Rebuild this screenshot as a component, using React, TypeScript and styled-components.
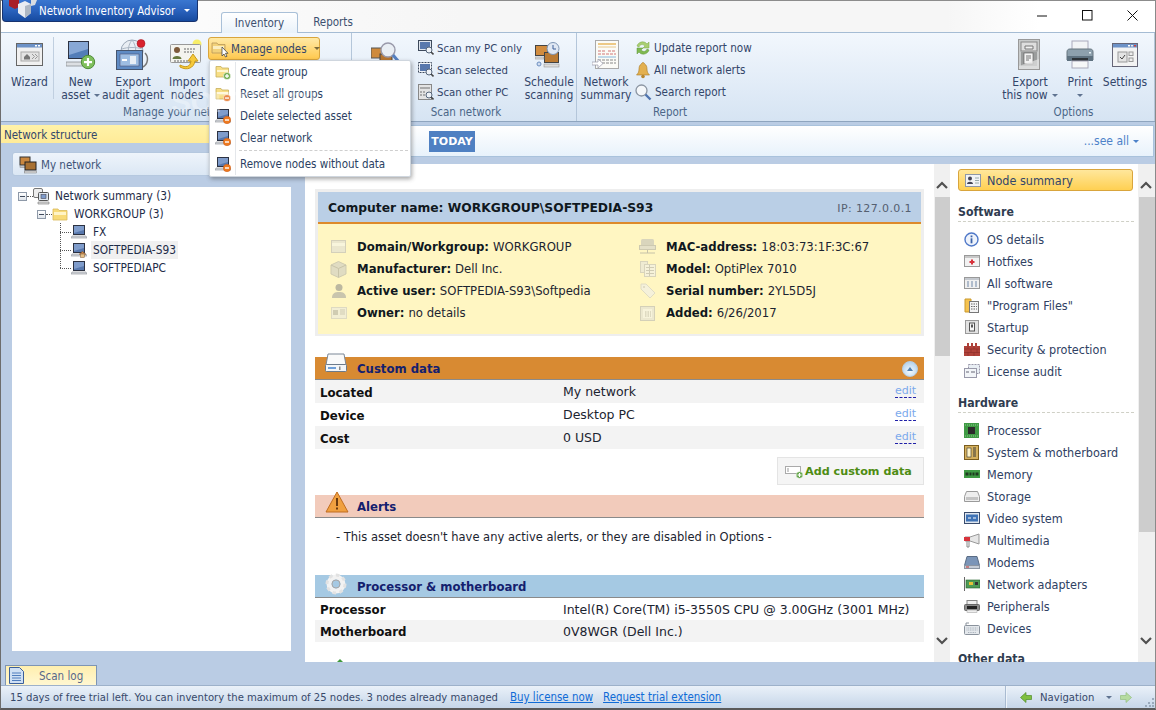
import React from "react";
import styled, { createGlobalStyle } from "styled-components";

const UI = `"DejaVu Sans Condensed", "DejaVu Sans", sans-serif`;
const WEB = `"DejaVu Sans", Verdana, sans-serif`;

const Global = createGlobalStyle`
  html, body { margin: 0; padding: 0; width: 1156px; height: 710px; overflow: hidden; background: #bacce4; }
  #root { width: 1156px; height: 710px; }
  * { box-sizing: border-box; }
`;

const Window = styled.div`
  position: relative; width: 1156px; height: 710px; display: flex; flex-direction: column;
  background: #bacce4; overflow: hidden; font-family: ${UI}; font-size: 12px; color: #2f3f60;
  border-left: 1px solid #6d6d6d; border-right: 1px solid #8a8a8a; border-bottom: 2px solid #5a5a5a;
`;

/* ---------- title bar ---------- */
const TitleBar = styled.div`
  height: 32px; flex: none; position: relative; display: flex; align-items: flex-end;
  padding-left: 220px; border-top: 1px solid #8c8c8c;
  background: linear-gradient(90deg, #fff 0, #f6f6f6 40%, #f6f6f6 82%, #fff 90%);
`;
const AppButton = styled.div`
  position: absolute; left: 1px; top: -1px; width: 196px; height: 22px; display: flex; align-items: center; white-space: nowrap;
  padding-left: 36px; color: #fff; font-size: 11.4px; border: 1px solid #17336f; border-top: none;
  border-radius: 0 0 4px 4px; background: linear-gradient(#3a77d0, #2a62bd 50%, #164a9f);
`;
const AppLogo = styled.svg`position: absolute; left: 4px; top: 0;`;
const Caret = styled.span<{ $c?: string; $ml?: number }>`
  display: inline-block; width: 0; height: 0; border: 3px solid transparent; border-top: 3px solid ${p => p.$c || "#5f7390"};
  border-bottom: none; margin-left: ${p => p.$ml ?? 4}px; vertical-align: middle; flex: none;
`;
const TabActive = styled.div`
  width: 77px; height: 21px; display: flex; align-items: center; justify-content: center; color: #3c5070;
  border: 1px solid #a9c0d8; border-bottom: none; border-radius: 3px 3px 0 0; background: linear-gradient(#fff, #e9f2fa);
  margin-bottom: -1px; position: relative; font-size: 11.5px;
`;
const Tab = styled.div`
  width: 70px; height: 20px; display: flex; align-items: center; justify-content: center; color: #3c5070; font-size: 11.5px;
`;
const WinControls = styled.div`
  position: absolute; top: 9px; right: 17px; display: flex; gap: 34px; align-items: center;
`;

/* ---------- ribbon ---------- */
const Ribbon = styled.div`
  height: 90px; flex: none; display: flex; border-top: 1px solid #a5bcd4; border-bottom: 1px solid #8fa5bf;
  background: linear-gradient(#f2f7fd, #d6e4f3);
`;
const Group = styled.div<{ $w?: number; $grow?: boolean; $sep?: boolean }>`
  ${p => (p.$grow ? "flex: 1;" : `width: ${p.$w}px; flex: none;`)}
  display: flex; flex-direction: column; position: relative;
  border-right: ${p => (p.$sep ? "1px solid #b4c6da" : "none")};
`;
const GroupBody = styled.div<{ $right?: boolean; $pl?: number }>`
  flex: 1; display: flex; padding-top: 4px; padding-left: ${p => p.$pl ?? 0}px; ${p => p.$right && "justify-content: flex-end; padding-right: 4px;"}
`;
const GroupLabel = styled.div<{ $pl?: number }>`
  height: 17px; line-height: 16px; text-align: center; color: #4b6688; font-size: 11.5px; padding-left: ${p => p.$pl ?? 0}px;
`;
const LargeBtn = styled.div<{ $w: number; $sep?: boolean }>`
  width: ${p => p.$w}px; flex: none; display: flex; flex-direction: column; align-items: center;
  text-align: center; color: #33466a; font-size: 12px; white-space: nowrap;
  border-right: ${p => (p.$sep ? "1px solid #c0cfe0" : "none")};
  height: ${p => (p.$sep ? "62px" : "auto")};
`;
const LargeIcon = styled.div`
  height: 36px; display: flex; align-items: center; justify-content: center; margin-bottom: 3px; flex: none;
`;
const LargeText = styled.div`line-height: 13px;`;
const SmallCol = styled.div<{ $w: number; $fs?: number }>`
  width: ${p => p.$w}px; flex: none; display: flex; flex-direction: column; font-size: ${p => p.$fs ?? 11.6}px;
`;
const SmallBtn = styled.div`
  height: 22px; display: flex; align-items: center; gap: 3px; white-space: nowrap; color: #33466a;
  & svg { flex: none; }
`;
const ManageBtn = styled.div`
  width: 112px; height: 23px; display: flex; align-items: center; gap: 2px; padding-left: 2px; color: #33466a; white-space: nowrap;
  border: 1px solid #d9a53c; border-radius: 3px; background: linear-gradient(#ffe9a6, #ffc94f); margin-left: -7px; font-size: 11.5px;
  flex: none; & svg { flex: none; }
`;

/* ---------- drop-down ---------- */
const Menu = styled.div`
  position: absolute; left: 208px; top: 60px; width: 202px; height: 117px; background: #fff;
  border: 1px solid #cfd6de; border-radius: 2px; box-shadow: 1px 2px 4px rgba(60, 60, 60, .45); z-index: 5; font-size: 11.5px;
  &::before { content: ""; position: absolute; left: 25px; top: 1px; bottom: 1px; width: 1px; background: #e4e7eb; }
`;
const MenuItem = styled.div`
  height: 22px; display: flex; align-items: center; padding-left: 5px; gap: 9px; color: #2b3f63; white-space: nowrap;
`;
const MenuSep = styled.div`
  height: 3px; margin: 1px 2px 0 29px; border-top: 1px dashed #cfcfcf;
`;
const Watermark = styled.div`
  position: absolute; left: 170px; top: 85px; font: bold 30px "Liberation Sans", sans-serif; letter-spacing: -0.5px; z-index: 6;
  color: rgba(255, 255, 255, .32); pointer-events: none;
`;

/* ---------- body ---------- */
const Body = styled.div`
  flex: 1; min-height: 0; display: grid; grid-template-columns: 304px 1fr; padding-top: 3px;
`;
const LeftCol = styled.div`
  display: flex; flex-direction: column; min-height: 0;
`;
const YellowBar = styled.div`
  height: 18px; flex: none; display: flex; align-items: center; padding: 2px 0 0 3px; background: linear-gradient(#fff2a8, #ffeb98);
  color: #34476a; font-size: 11.5px;
`;
const NetworkBtn = styled.div`
  height: 24px; flex: none; margin: 9px 4px 0 11px; display: flex; align-items: center; gap: 4px; padding: 1px 0 0 6px;
  border: 1px solid #b5c8df; border-radius: 3px; background: linear-gradient(#eef4fb, #dbe7f4); color: #3e5478; font-size: 11.5px;
`;
const TreePanel = styled.div`
  flex: none; height: 464px; margin: 11px 14px 0 11px; background: #fff; padding: 0 0 0 6px; font-size: 11.8px; color: #1e2c48;
`;
const TreeRow = styled.div<{ $ind: number }>`
  height: 18px; display: flex; align-items: center; padding-left: ${p => p.$ind}px; white-space: nowrap;
`;
const Expander = styled.span`
  width: 9px; height: 9px; flex: none; border: 1px solid #8e99a8; background: linear-gradient(#fff, #dfe4ea); position: relative;
  &::after { content: ""; position: absolute; left: 1px; right: 1px; top: 3px; height: 1px; background: #3f4a5c; }
`;
const Dots = styled.span<{ $w: number }>`
  width: ${p => p.$w}px; flex: none; border-top: 1px dotted #555;
`;
const TreeLabel = styled.span<{ $sel?: boolean; $ml: number }>`
  margin-left: ${p => p.$ml}px; padding: 0 2px; line-height: 18px; background: ${p => (p.$sel ? "#f0f0f0" : "transparent")};
`;
const TreeBranch = styled.div`
  margin-left: 42px; border-left: 1px dotted #555; height: 45px; margin-bottom: -45px; width: 1px;
`;

const RightCol = styled.div`
  display: flex; flex-direction: column; min-height: 0; min-width: 0;
`;
const TodayBar = styled.div`
  height: 32px; flex: none; display: flex; align-items: center; justify-content: space-between; padding: 0 14px 0 124px;
  border: 1px solid #a9c2dc; border-left: none; margin-right: 1px; background: linear-gradient(#fff, #e8f2fb);
`;
const TodayTag = styled.div`
  width: 46px; height: 21px; display: flex; align-items: center; justify-content: center; background: #4f80c2; color: #fff; font: bold 11px ${WEB};
`;
const SeeAll = styled.div`color: #4d82c9; font-size: 12px;`;

const MainArea = styled.div`
  margin-top: 7px; height: 498px; flex: none; display: flex; background: #fff;
`;
const Report = styled.div`
  width: 629px; flex: none; overflow: hidden; padding: 25px 10px 0 10px; font: 12.5px ${WEB}; color: #1c2430;
`;
const Scroll = styled.div<{ $grow?: boolean }>`
  ${p => (p.$grow ? "flex: 1;" : "width: 16px; flex: none;")} background: #f0f0f0; position: relative;
`;
const ScrollArrow = styled.svg<{ $top: number }>`position: absolute; left: 2px; top: ${p => p.$top}px;`;
const Thumb = styled.div<{ $h: number }>`
  position: absolute; left: 1px; right: 0; top: 33px; height: ${p => p.$h}px; background: #cdcdcd;
`;

const NodeCard = styled.div`
  border: 3px solid #eee; border-bottom-width: 2px; height: 147px; background: #fff6c2;
`;
const NodeHead = styled.div`
  height: 32px; display: flex; align-items: center; justify-content: space-between; padding: 2px 9px 0 10px; background: #bacfe6;
  border-bottom: 2px solid #dd8a2b; font-size: 12px;
`;
const NodeTitle = styled.b`font: bold 12.3px ${WEB}; color: #101820;`;
const NodeIp = styled.span`color: #556070; font-size: 11px; letter-spacing: .4px;`;
const NodeGrid = styled.div`
  display: grid; grid-template-columns: 309px 1fr; padding: 12px 0 0 12px; grid-auto-rows: 22px;
`;
const NodeItem = styled.div`
  display: flex; align-items: center; gap: 10px; white-space: nowrap; font-size: 11.7px;
  & b { font-weight: bold; color: #101820; margin-right: 4px; }
`;
const Section = styled.div<{ $bg: string }>`
  height: 23px; position: relative; background: ${p => p.$bg}; border-bottom: 1px solid #8a8a8a; padding: 2px 0 0 42px;
  display: flex; align-items: center; font: bold 11.7px ${WEB}; color: #14206e; flex: none;
`;
const SectionIcon = styled.div<{ $b: number; $l?: number }>`
  position: absolute; left: ${p => p.$l ?? 10}px; bottom: ${p => p.$b}px; display: flex;
`;
const Collapse = styled.div`
  position: absolute; right: 6px; top: 4px; width: 16px; height: 16px; border-radius: 50%;
  background: radial-gradient(circle at 50% 65%, #f4fbff, #a6c8e6); border: 1px solid #b6cfe4; display: flex; align-items: center; justify-content: center;
  &::after { content: ""; border: 3px solid transparent; border-bottom: 4px solid #4f7fb0; border-top: none; }
`;
const DataRow = styled.div<{ $alt?: boolean; $h?: number }>`
  height: ${p => p.$h ?? 23}px; display: grid; grid-template-columns: 243px 1fr 29px; align-items: center; padding-left: 5px;
  background: ${p => (p.$alt ? "#f3f3f3" : "#fff")}; white-space: nowrap;
`;
const DataLabel = styled.b`font-weight: bold; color: #101010; font-size: 11.8px; padding-top: 2px;`;
const Edit = styled.span`
  color: #7ba9ec; font-size: 11px; border-bottom: 1px dashed #2020a8; line-height: 12px; width: 21px; margin-top: -1px;
`;
const AddRow = styled.div`
  height: 36px; display: flex; justify-content: flex-end; align-items: flex-end;
`;
const AddBtn = styled.div`
  width: 147px; height: 28px; display: flex; align-items: center; padding: 1px 0 0 7px; background: #f5f5f5; border: 1px solid #e4e4e4;
  color: #4e8c12; font: bold 11.2px ${WEB}; gap: 1px;
`;
const Gap = styled.div<{ $h: number }>`height: ${p => p.$h}px;`;
const Notice = styled.div`
  height: 57px; padding: 11px 0 0 21px; font-size: 11.5px; line-height: 16px;
`;

const Side = styled.div`
  width: 188px; flex: none; overflow: hidden; padding: 5px 5px 0 8px; font-size: 12.5px;
`;
const SideActive = styled.div`
  height: 22px; display: flex; align-items: center; gap: 6px; padding: 0 0 0 5px; border: 1px solid #d9a53c; border-radius: 3px;
  background: linear-gradient(#ffe79c, #ffd052); color: #33466a;
`;
const SideHead = styled.div<{ $mt: number }>`
  margin-top: ${p => p.$mt}px; margin-bottom: 6px; height: 19px; line-height: 18px; font-weight: bold; font-size: 12.2px; color: #2f3c50;
  border-bottom: 1px dashed #cfd0c6; width: 176px;
`;
const SideItem = styled.div`
  height: 22px; display: flex; align-items: center; padding: 0 0 0 5px; gap: 7px; color: #2f4163; white-space: nowrap;
`;
const IconBox = styled.span`width: 17px; flex: none; display: flex; justify-content: center;`;

/* ---------- bottom ---------- */
const TabStrip = styled.div`
  height: 23px; flex: none; padding: 3px 0 0 4px; display: flex;
`;
const LogTab = styled.div`
  width: 92px; height: 20px; display: flex; align-items: center; gap: 15px; padding-left: 3px; border: 1px solid #7e95b4; border-bottom: none;
  background: linear-gradient(#ffefae, #fff7d2); color: #58688a; font-size: 11.5px;
`;
const Status = styled.div`
  height: 23px; flex: none; display: flex; align-items: center; padding-left: 9px; border-top: 1px solid #9db1ca; color: #37496a; font-size: 11.2px; white-space: nowrap;
  background: linear-gradient(#eaf1f9, #c6d6e9); position: relative;
`;
const StatusLink = styled.a`color: #0f6bd6; text-decoration: underline; margin-left: 10px; font-size: 11.4px; &:first-of-type { margin-left: 12px; }`;
const NavBox = styled.div`
  position: absolute; left: 1004px; top: 0; bottom: 0; right: 0; border-left: 1px solid #a9bbd1; display: flex; align-items: center; padding-left: 14px; gap: 8px;
  box-shadow: inset 1px 0 0 #eef4fa;
`;
const Grip = styled.svg`position: absolute; right: 0; bottom: 1px;`;

/* ---------- icons ---------- */
type IP = { s?: number };
const Laptop = ({ s = 16, badge }: IP & { badge?: "minus" | "home" }) => (
  <svg width={s} height={s} viewBox="0 0 16 16">
    <rect x="2.5" y="1.5" width="11" height="9" fill="#5878ad" stroke="#2c3242" />
    <path d="M3 2h10v4L3 9z" fill="#7f9ccb" />
    <path d="M1 12h14l1 2H0z" fill="#d8dbdf" stroke="#8b8f96" strokeWidth=".6" />
    {badge === "minus" && (<><circle cx="12" cy="12" r="3.7" fill="#ee7a1f" stroke="#c9581a" strokeWidth=".5" /><rect x="10" y="11.3" width="4" height="1.4" fill="#fff" /></>)}
    {badge === "home" && (<><path d="M8 12.5l3.5-3 3.5 3" fill="#c98a50" stroke="#8c5c30" strokeWidth=".8" /><rect x="9.5" y="12" width="4" height="3.5" fill="#e6c088" stroke="#7e5a34" strokeWidth=".5" /></>)}
  </svg>
);
const FolderBadge = ({ kind }: { kind: "plus" | "minus" }) => (
  <svg width="16" height="16" viewBox="0 0 16 16">
    <path d="M1 2.5h5l1 1.5h6.5v9H1z" fill="#f7de85" stroke="#c7ae5c" strokeWidth=".8" />
    <path d="M2 6h11v2H2z" fill="#fff6cf" />
    <circle cx="12" cy="12" r="3.6" fill={kind === "plus" ? "#74ad50" : "#e98a4a"} stroke="#fff" strokeWidth=".5" />
    <rect x="10" y="11.4" width="4" height="1.3" fill="#fff" />
    {kind === "plus" && <rect x="11.35" y="10" width="1.3" height="4" fill="#fff" />}
  </svg>
);
const Folder = ({ s = 16 }: IP) => (
  <svg width={s} height={s} viewBox="0 0 16 16">
    <path d="M1 3h5l1 1.5h8V14H1z" fill="#f8db78" stroke="#d9b95a" strokeWidth=".8" />
    <path d="M2 6h12v3H2z" fill="#fff4c6" />
  </svg>
);
const FolderCursor = () => (
  <svg width="18" height="18" viewBox="0 0 18 18">
    <path d="M1 3h5l1 1.5h7V13H1z" fill="#f3d27a" stroke="#b8985a" strokeWidth=".8" />
    <path d="M2 6h11v3H2z" fill="#fbeec0" />
    <path d="M11 7v9l2-2 1.500 3 1.500-.7-1.500-3H17z" fill="#fff" stroke="#333" strokeWidth=".7" />
  </svg>
);
const TwoPCs = ({ s = 18 }: IP) => (
  <svg width={s} height={s} viewBox="0 0 18 18">
    <rect x="1" y="1" width="10" height="8" fill="#c9873f" stroke="#333" />
    <rect x="1" y="10" width="10" height="1.5" fill="#ddd" stroke="#777" strokeWidth=".5" />
    <rect x="6" y="6" width="11" height="8" fill="#a87132" stroke="#222" />
    <rect x="5.5" y="15" width="12" height="2" fill="#ddd" stroke="#777" strokeWidth=".5" />
  </svg>
);
const NetSum = () => (
  <svg width="17" height="17" viewBox="0 0 17 17">
    <rect x=".5" y=".5" width="9" height="9" rx="1.5" fill="#eee" stroke="#777" />
    <rect x="5.5" y="4.5" width="10" height="8" rx="1" fill="#dfe7f0" stroke="#555" />
    <rect x="8" y="6.5" width="5" height="4" fill="#7f9ccb" stroke="#445" strokeWidth=".6" />
    <path d="M5 14h11v2H5z" fill="#ddd" stroke="#777" strokeWidth=".6" />
  </svg>
);
const Wizard = () => (
  <svg width="28" height="24" viewBox="0 0 28 24">
    <rect x=".5" y=".5" width="26" height="22" fill="#f1f1f1" stroke="#666" />
    <rect x="1" y="1" width="25" height="3.5" fill="#6d92c7" />
    <rect x="19" y="2" width="2" height="1.5" fill="#fff" /><rect x="22" y="2" width="2" height="1.5" fill="#fff" />
    <rect x="5" y="9" width="18" height="9" fill="#e4e4e4" stroke="#aaa" />
    <path d="M8 14l3-3 3 3v2.5H8z" fill="#777" />
    <path d="M16 11l2.5 2.5L16 16M19 11l2.5 2.5L19 16" stroke="#999" fill="none" />
  </svg>
);
const NewAsset = () => (
  <svg width="30" height="30" viewBox="0 0 30 30">
    <rect x="2.5" y="1.5" width="20" height="17" fill="#537db8" stroke="#2c3242" />
    <path d="M3 2h19v7L3 15z" fill="#88a8d6" />
    <path d="M0 22h22l2 4H0z" fill="#dcdfe3" stroke="#8b8f96" strokeWidth=".8" />
    <circle cx="22" cy="22" r="6.7" fill="#7fbf5d" stroke="#4f8c38" />
    <rect x="18" y="21" width="8" height="2.2" fill="#fff" /><rect x="20.9" y="18" width="2.2" height="8" fill="#fff" />
  </svg>
);
const ExportAgent = () => (
  <svg width="34" height="32" viewBox="0 0 34 32">
    <circle cx="16" cy="12" r="11" fill="#e9eef4" stroke="#9aa7b6" />
    <path d="M6 10c5-2 15-2 20 0M16 1c-5 6-5 16 0 22M16 1c5 6 5 16 0 22" stroke="#aab6c4" fill="none" />
    <path d="M29 14c4 4 3 11-2 14" stroke="#777" fill="none" strokeWidth="1.5" />
    <rect x=".5" y="11.5" width="26" height="19" fill="#5f8bc4" stroke="#46556e" />
    <rect x="4" y="15" width="19" height="12" fill="#9ebde2" stroke="#446" strokeWidth=".5" />
    <rect x="14" y="17" width="6" height="8" fill="#e8eef6" /><rect x="6" y="20" width="5" height="2" fill="#fff" />
    <circle cx="25" cy="4.5" r="4" fill="#d8222e" stroke="#a0141e" strokeWidth=".5" />
  </svg>
);
const ImportNodes = () => (
  <svg width="34" height="32" viewBox="0 0 34 32">
    <circle cx="27" cy="5" r="4.5" fill="#f8ee68" />
    <rect x=".5" y="5.5" width="30" height="18" rx="1" fill="#f4f4ef" stroke="#999" />
    <circle cx="7" cy="11" r="3" fill="#7d5a3a" />
    <path d="M2.5 20c0-4 9-4 9 0z" fill="#66783c" />
    <path d="M14 10h12M14 13h10M4 22h24" stroke="#666" strokeWidth="1" strokeDasharray="2 1" />
    <path d="M10 26c6 3 10 2 11-4h-3l5-7 5 7h-3c-1 7-8 10-15 6z" fill="#f6c93a" stroke="#c99a18" />
  </svg>
);
const ScanBig = () => (
  <svg width="28" height="28" viewBox="0 0 28 28">
    <rect x="0" y="7" width="12" height="10" fill="#cf8a3c" stroke="#555" />
    <rect x="9" y="13" width="12" height="10" fill="#b77530" stroke="#444" />
    <circle cx="17" cy="9" r="7" fill="#e9eef4" stroke="#99a" strokeWidth="1.4" />
    <path d="M22 14l5 6" stroke="#557fc0" strokeWidth="3" />
  </svg>
);
const Schedule = () => (
  <svg width="28" height="27" viewBox="0 0 28 27">
    <rect x=".5" y="3.5" width="12" height="10" fill="#d18c3f" stroke="#444" />
    <rect x="9.5" y="10.5" width="14" height="10" fill="#ba7a33" stroke="#444" />
    <rect x="0" y="15" width="9" height="2" fill="#ddd" stroke="#888" strokeWidth=".5" />
    <rect x="9" y="22" width="15" height="3" fill="#ddd" stroke="#888" strokeWidth=".5" />
    <circle cx="4" cy="22" r="2" fill="#cfdcf0" stroke="#6c8fc0" /><circle cx="18" cy="6.5" r="6" fill="#dfe7f3" stroke="#7e95b4" />
    <path d="M18 3v4h3" stroke="#3d5f98" fill="none" />
  </svg>
);
const NetSummary = () => (
  <svg width="28" height="30" viewBox="0 0 28 30">
    <rect x="3.5" y=".5" width="23" height="28" fill="#fbfbf7" stroke="#aaa" />
    <path d="M6 4h18" stroke="#e8b860" strokeWidth="1.5" /><path d="M6 7h18" stroke="#e8c88c" />
    <path d="M6 11h8M16 11h8M6 14h18" stroke="#c66" strokeWidth=".9" strokeDasharray="3 1" />
    <path d="M6 17h18" stroke="#88b8dc" /><path d="M6 20h18M6 23h18" stroke="#888" strokeDasharray="3 1" />
    <path d="M0 22h6v-3l5 4.5-5 4.5v-3H0z" fill="#fff" stroke="#99a" strokeWidth=".7" />
  </svg>
);
const ExportNow = () => (
  <svg width="24" height="32" viewBox="0 0 24 32">
    <rect x=".5" y=".5" width="21" height="30" fill="#c9cbcb" stroke="#999" />
    <rect x="3" y="3" width="16" height="9" fill="#dedede" stroke="#888" />
    <path d="M7 7h8v3H7z" fill="#f1f1f1" stroke="#777" />
    <rect x="3" y="13" width="16" height="14" fill="#9b9d9d" />
    <rect x="6" y="14" width="9" height="11" fill="#f3f3f3" stroke="#555" strokeWidth=".6" />
    <path d="M8 17h5M8 19h5M8 21h3" stroke="#777" />
    <path d="M1 27L21 20v10H1z" fill="#e4e4e4" opacity=".7" />
  </svg>
);
const Printer = () => (
  <svg width="28" height="30" viewBox="0 0 28 30">
    <rect x="6" y="1" width="16" height="11" fill="#f2f4f6" stroke="#aab" />
    <path d="M1 12c0-2 1-3 3-3h20c2 0 3 1 3 3v8H1z" fill="#8da0ad" stroke="#66757f" />
    <rect x="1" y="16" width="26" height="5" fill="#5f7280" />
    <rect x="6" y="18" width="16" height="3" fill="#2d3338" />
    <rect x="6" y="21" width="16" height="7" fill="#f6f7f8" stroke="#aab" />
    <rect x="23" y="12" width="2" height="1.5" fill="#e3eef3" />
  </svg>
);
const SettingsIco = () => (
  <svg width="27" height="25" viewBox="0 0 27 25">
    <rect x=".5" y=".5" width="25" height="23" fill="#f3f3f3" stroke="#667" />
    <rect x="1" y="1" width="24" height="3.5" fill="#6d92c7" />
    <rect x="16" y="2" width="2" height="1.5" fill="#fff" /><rect x="19" y="2" width="2" height="1.5" fill="#e8e8e8" /><rect x="22" y="2" width="2" height="1.5" fill="#d04040" />
    <rect x="6" y="9" width="9" height="10" fill="#e4e4e4" stroke="#999" />
    <path d="M8 14l2 2 3-4" stroke="#444" fill="none" />
    <rect x="17" y="9" width="4" height="3.5" fill="#eee" stroke="#999" /><rect x="17" y="15" width="4" height="3.5" fill="#eee" stroke="#999" />
  </svg>
);
const ScanMy = ({ dash }: { dash?: boolean }) => (
  <svg width="16" height="16" viewBox="0 0 16 16">
    <rect x=".5" y=".5" width="13" height="10" fill={dash ? "#f3f6fa" : "#dfe5ee"} stroke="#3e4a5c" strokeDasharray={dash ? "2 1" : undefined} />
    <rect x="2" y="2" width="10" height="7" fill="#5878ad" />
    <circle cx="11" cy="10" r="3" fill="#eef2f7" stroke="#55657a" />
    <path d="M13 12l2.5 2.5" stroke="#444" strokeWidth="1.6" />
  </svg>
);
const ScanOther = () => (
  <svg width="16" height="17" viewBox="0 0 16 17">
    <rect x=".5" y=".5" width="13" height="15" fill="#e3e3e3" stroke="#888" />
    <path d="M2 3h10v2H2zM2 7h2v2H2zM5 7h2v2H5zM2 10h2v2H2zM5 10h2v2H5z" fill="#aaa" />
    <circle cx="11" cy="11" r="3" fill="#eef2f7" stroke="#55657a" />
    <path d="M13 13l2.5 2.5" stroke="#444" strokeWidth="1.6" />
  </svg>
);
const Refresh = () => (
  <svg width="16" height="16" viewBox="0 0 16 16">
    <path d="M2 6c1-4 7-6 10-2l2-2v6H8l2-2c-2-2-5-2-6 1z" fill="#a9cf72" stroke="#78a545" strokeWidth=".5" />
    <path d="M14 10c-1 4-7 6-10 2l-2 2V8h6l-2 2c2 2 5 2 6-1z" fill="#7fb950" stroke="#5f9438" strokeWidth=".5" />
  </svg>
);
const Bell = () => (
  <svg width="16" height="17" viewBox="0 0 16 17">
    <path d="M8 .5c1 0 1.500 1 1.500 1.500 2 .8 2.500 3 2.500 5 0 3 1 4.500 2.500 6h-13C3 11.500 4 10 4 7c0-2 .5-4.200 2.500-5C6.500 1.500 7 .5 8 .5z" fill="#e3b04f" stroke="#a97a25" strokeWidth=".6" />
    <circle cx="8" cy="14.500" r="1.800" fill="#b8862d" />
  </svg>
);
const Search = () => (
  <svg width="17" height="17" viewBox="0 0 17 17">
    <circle cx="6.500" cy="6.500" r="5.500" fill="#f4f7fa" stroke="#8b95a2" strokeWidth="1.300" />
    <path d="M10.500 10.500l5 5" stroke="#4f74b0" strokeWidth="2.400" />
  </svg>
);
const I = {
  domain: <svg width="16" height="14" viewBox="0 0 16 14"><rect x=".5" y=".5" width="14" height="12" fill="#ebe7ce" stroke="#d4d0ba" /><rect x="1" y="3" width="13" height="3" fill="#f8f5dc" /></svg>,
  box: <svg width="17" height="17" viewBox="0 0 17 17"><path d="M8.500.5l7.500 3.500v9l-7.500 3.500L1 13V4z" fill="#e0dcc2" stroke="#cfcbb0" /><path d="M1 4l7.500 3.500L16 4M8.500 7.500v9" stroke="#c8c4a8" fill="none" /></svg>,
  user: <svg width="16" height="16" viewBox="0 0 16 16"><circle cx="8" cy="4.500" r="3.500" fill="#bcb8a0" /><path d="M1 15c0-5 3-6 7-6s7 1 7 6z" fill="#c9c5ad" /></svg>,
  card: <svg width="16" height="12" viewBox="0 0 16 12"><rect x=".5" y=".5" width="15" height="11" fill="#f2eed4" stroke="#dedac2" /><rect x="2" y="3" width="5" height="5" fill="#d0ccb2" /><path d="M9 3h5M9 5h5M9 7h5" stroke="#cfcbb2" /></svg>,
  mac: <svg width="17" height="16" viewBox="0 0 17 16"><rect x="2" y="0" width="13" height="8" rx="1.500" fill="#d9d5bc" /><rect x=".5" y="6.500" width="16" height="4" fill="#e4e0c8" stroke="#cdc9b0" /><path d="M8.500 11v3M1 14h15" stroke="#c6c2a8" /></svg>,
  model: <svg width="16" height="16" viewBox="0 0 16 16"><rect x=".5" y=".5" width="7" height="11" fill="#efebd2" stroke="#d8d4bc" /><rect x="4.500" y="3.500" width="11" height="12" fill="#f6f2da" stroke="#d8d4bc" /><path d="M6 6.500h8M6 9.500h8M6 12.500h8M9.500 4v11" stroke="#d0ccb4" /></svg>,
  tag: <svg width="16" height="16" viewBox="0 0 16 16"><path d="M1 1h5l9 9-5 5-9-9z" fill="#f5f1da" stroke="#e0dcc4" /><circle cx="4" cy="4" r="1" fill="#d8d4bc" /></svg>,
  cal: <svg width="15" height="15" viewBox="0 0 15 15"><rect x=".5" y=".5" width="14" height="14" fill="#ece8cf" stroke="#d4d0b8" /><rect x="3" y="3" width="9" height="9" fill="#f7f3db" /><path d="M5 6h6M5 8h6M5 10h6" stroke="#c6c2a8" strokeDasharray="1.500 1" /></svg>,
  drive: <svg width="22" height="20" viewBox="0 0 22 20"><path d="M3 1h16l2 11H1z" fill="#fafafa" stroke="#7b8796" /><rect x=".5" y="11.500" width="21" height="7" rx="1" fill="#f3f5f7" stroke="#6c7a8a" /><rect x="3" y="14" width="8" height="2" fill="#6f9fd8" /><rect x="14" y="13.500" width="1.500" height="3.500" fill="#888" /></svg>,
  warn: <svg width="24" height="22" viewBox="0 0 24 22"><path d="M12 1l11 20H1z" fill="#f0a040" stroke="#c06d20" strokeLinejoin="round" /><rect x="11" y="7" width="2" height="8" fill="#6a3a10" /><rect x="11" y="16.500" width="2" height="2" fill="#6a3a10" /></svg>,
  gear: <svg width="22" height="22" viewBox="0 0 22 22"><circle cx="11" cy="11" r="7" fill="none" stroke="#f2f2f2" strokeWidth="5" /><circle cx="11" cy="11" r="9" fill="none" stroke="#e2e2e2" strokeWidth="3" strokeDasharray="3.500 3.500" /><circle cx="11" cy="11" r="4" fill="none" stroke="#a8a8a8" /></svg>,
  net: <svg width="12" height="6" viewBox="0 0 12 6"><path d="M6 0l6 6H0z" fill="#3f9a3c" /></svg>,
  addData: <svg width="19" height="16" viewBox="0 0 19 16"><rect x=".5" y="2.500" width="15" height="7" fill="#fff" stroke="#aaa" /><path d="M3 4v4" stroke="#999" /><circle cx="14.500" cy="11" r="3.300" fill="#5a9f3f" stroke="#e8f3e0" strokeWidth=".6" /><rect x="12.500" y="10.400" width="4" height="1.200" fill="#fff" /><rect x="13.900" y="9" width="1.200" height="4" fill="#fff" /></svg>,
  idCard: <svg width="16" height="13" viewBox="0 0 16 13"><rect x=".5" y=".5" width="15" height="12" fill="#f1f3f6" stroke="#8e98a8" /><circle cx="5" cy="4.500" r="2" fill="#445" /><path d="M2 10c0-3 6-3 6 0z" fill="#445" /><path d="M10 4h4M10 6.500h4M10 9h4" stroke="#9aa" /></svg>,
  info: <svg width="15" height="15" viewBox="0 0 15 15"><circle cx="7.500" cy="7.500" r="6.500" fill="#eef3fb" stroke="#4f78c8" strokeWidth="1.400" /><rect x="6.600" y="6.300" width="1.800" height="5" fill="#3b62a8" /><rect x="6.600" y="3.500" width="1.800" height="1.800" fill="#3b62a8" /></svg>,
  hotfix: <svg width="16" height="12" viewBox="0 0 16 12"><rect x=".5" y=".5" width="15" height="11" fill="#f2f2f2" stroke="#999" /><rect x="1" y="1" width="14" height="2" fill="#c8c8c8" /><path d="M7 4.500h2v1.500h1.500v2H9v1.500H7V8H5.500V6H7z" fill="#d8333c" /></svg>,
  allsw: <svg width="16" height="12" viewBox="0 0 16 12"><rect x=".5" y=".5" width="15" height="11" fill="#f0f0f0" stroke="#999" /><rect x="1" y="1" width="14" height="2" fill="#c4c8ce" /><path d="M3 5h2M7 5h2M11 5h2M3 7h2M7 7h2M11 7h2M3 9h2M7 9h2M11 9h2" stroke="#7088a8" /></svg>,
  prog: <svg width="15" height="16" viewBox="0 0 15 16"><path d="M1 2h6v13H1z" fill="#f5c24f" stroke="#c9992f" /><rect x="5.500" y="4.500" width="9" height="11" fill="#f4f4f4" stroke="#777" /><path d="M7 7h6M7 9.500h6M7 12h6" stroke="#666" strokeDasharray="1.500 1" /></svg>,
  startup: <svg width="14" height="14" viewBox="0 0 14 14"><rect x=".5" y=".5" width="13" height="13" fill="#e2e2e2" stroke="#999" /><rect x="4.500" y="3" width="5" height="8" fill="#f5f5f5" stroke="#555" /><rect x="6" y="4.500" width="2" height="3" fill="#555" /></svg>,
  wall: <svg width="16" height="13" viewBox="0 0 16 13"><path d="M0 3h3V0h2v3h2V0h2v3h2V0h2v3h3v10H0z" fill="#b0423a" /><path d="M0 6h16M0 9.500h16M4 3v3M10 3v3M7 6v3.500M13 6v3.500M4 9.500V13M10 9.500V13" stroke="#8a2e28" strokeWidth=".6" /></svg>,
  license: <svg width="16" height="14" viewBox="0 0 16 14"><rect x="4.500" y=".5" width="11" height="9" fill="#e8eef4" stroke="#99a" strokeDasharray="2 1" /><rect x=".5" y="4.500" width="12" height="9" fill="#f2f5f8" stroke="#99a" /><path d="M2 8h3M7 8h4" stroke="#667" /></svg>,
  cpu: <svg width="15" height="15" viewBox="0 0 15 15"><rect width="15" height="15" fill="#3f9a44" /><rect x="4" y="4" width="7" height="7" fill="#2a2a2a" /><path d="M1 2h13M1 13h13" stroke="#8bc98e" strokeDasharray="1 1" /></svg>,
  board: <svg width="15" height="15" viewBox="0 0 15 15"><rect x=".5" y=".5" width="14" height="14" fill="#d5b15f" stroke="#7b5d1e" /><rect x="3" y="3" width="4" height="9" fill="#fff4c8" stroke="#333" strokeWidth=".6" /><path d="M9 3h3M9 5h3M9 7h3M9 9h3M9 11h3" stroke="#3a3a3a" /></svg>,
  mem: <svg width="16" height="8" viewBox="0 0 16 8"><rect width="16" height="8" fill="#3f9a44" /><path d="M1.500 2.500h3v3h-3zM5.500 2.500h2v3h-2zM8.500 2.500h2v3h-2zM11.500 2.500h3v3h-3z" fill="#1f3b20" /></svg>,
  storage: <svg width="16" height="11" viewBox="0 0 16 11"><path d="M2.500.5h11l2 5v5H.5v-5z" fill="#eee" stroke="#9a9a9a" /><rect x="2" y="6" width="12" height="3" fill="#c4c4c4" /></svg>,
  video: <svg width="16" height="12" viewBox="0 0 16 12"><rect x=".5" y=".5" width="15" height="11" fill="#dfe6ef" stroke="#3a4d6e" /><rect x="2" y="2.500" width="12" height="7" fill="#3f73b6" /><path d="M4 6h3M9 6h3" stroke="#fff" /></svg>,
  mm: <svg width="16" height="15" viewBox="0 0 16 15"><path d="M15 1v10L6 8H1V4h5z" fill="#e6e6e6" stroke="#999" /><path d="M0 4h6v4H0z" fill="#d8333c" /><path d="M3 8v6h2V8" fill="none" stroke="#888" /></svg>,
  modem: <svg width="16" height="13" viewBox="0 0 16 13"><path d="M3 .5h10l2.500 9h-15z" fill="#7b95b8" stroke="#5a6c85" /><rect x=".5" y="9.500" width="15" height="3" fill="#c5ccd6" stroke="#8b95a2" /><rect x="2" y="10.500" width="3" height="1" fill="#c53030" /></svg>,
  adapter: <svg width="16" height="14" viewBox="0 0 16 14"><path d="M.5 0v14" stroke="#666" /><rect x="2" y="3" width="14" height="8" fill="#4d9a55" stroke="#23602a" strokeWidth=".6" /><rect x="5" y="5" width="4" height="3" fill="#e4c23a" /><rect x="11" y="5" width="3" height="3" fill="#333" /></svg>,
  periph: <svg width="16" height="13" viewBox="0 0 16 13"><rect x="3" y=".5" width="10" height="4" fill="#eee" stroke="#888" /><rect x=".5" y="4.500" width="15" height="6" rx="1" fill="#8a8a8a" stroke="#666" /><rect x="3" y="6" width="10" height="3" fill="#222" /><rect x="3" y="10" width="10" height="2.500" fill="#eee" stroke="#999" strokeWidth=".5" /></svg>,
  kbd: <svg width="16" height="13" viewBox="0 0 16 13"><rect x=".5" y="3.500" width="15" height="9" rx="1" fill="#e4e8ec" stroke="#8a929c" /><path d="M2.500 6h11M2.500 8h11M4 10.500h8" stroke="#a8b0ba" strokeDasharray="1 .7" /><path d="M2 3V1h3" stroke="#8a929c" fill="none" /></svg>,
  doc: <svg width="15" height="17" viewBox="0 0 15 17"><path d="M.5.5h10l4 4v12H.5z" fill="#cfe0f4" stroke="#3b5f9a" /><path d="M3 6h9M3 8.500h9M3 11h9M3 13.500h9" stroke="#4f7dbd" /></svg>,
  arrowL: <svg width="12" height="11" viewBox="0 0 12 11"><path d="M6 .5v3h5.500v4H6v3L.5 5.500z" fill="#7fbf40" stroke="#4f8c2a" strokeWidth=".7" /></svg>,
  arrowR: <svg width="12" height="11" viewBox="0 0 12 11"><path d="M6 .5v3H.5v4H6v3l5.500-5z" fill="#b5dba0" stroke="#93be7e" strokeWidth=".7" /></svg>,
};
const ChevUp = ({ top }: { top: number }) => (
  <ScrollArrow $top={top} width="12" height="8" viewBox="0 0 12 8"><path d="M1 7l5-5 5 5" fill="none" stroke="#505050" strokeWidth="2.200" /></ScrollArrow>
);
const ChevDown = ({ top }: { top: number }) => (
  <ScrollArrow $top={top} width="12" height="8" viewBox="0 0 12 8"><path d="M1 1l5 5 5-5" fill="none" stroke="#505050" strokeWidth="2.200" /></ScrollArrow>
);

const software: [string, React.ReactNode][] = [
  ["OS details", I.info], ["Hotfixes", I.hotfix], ["All software", I.allsw], ['"Program Files"', I.prog],
  ["Startup", I.startup], ["Security & protection", I.wall], ["License audit", I.license],
];
const hardware: [string, React.ReactNode][] = [
  ["Processor", I.cpu], ["System & motherboard", I.board], ["Memory", I.mem], ["Storage", I.storage], ["Video system", I.video],
  ["Multimedia", I.mm], ["Modems", I.modem], ["Network adapters", I.adapter], ["Peripherals", I.periph], ["Devices", I.kbd],
];
const nodeInfo: [React.ReactNode, string, string, React.ReactNode, string, string][] = [
  [I.domain, "Domain/Workgroup:", "WORKGROUP", I.mac, "MAC-address:", "18:03:73:1F:3C:67"],
  [I.box, "Manufacturer:", "Dell Inc.", I.model, "Model:", "OptiPlex 7010"],
  [I.user, "Active user:", "SOFTPEDIA-S93\\Softpedia", I.tag, "Serial number:", "2YL5D5J"],
  [I.card, "Owner:", "no details", I.cal, "Added:", "6/26/2017"],
];

export default function App() {
  return (
    <Window>
      <Global />
      <TitleBar>
        <AppButton>
          <AppLogo width="30" height="20" viewBox="0 0 30 20">
            <path d="M2 0h10v7l-4 2-6-3z" fill="#a81e28" />
            <path d="M11 4l7-3 6 3v9l-6 5-7-5z" fill="#e9edf2" />
            <path d="M18 6v12l6-5V4z" fill="#aeb8c4" />
            <path d="M24 0h6l-2 5-4 1z" fill="#d8dde3" />
          </AppLogo>
          Network Inventory Advisor
          <Caret $c="#fff" $ml={9} />
        </AppButton>
        <TabActive>Inventory</TabActive>
        <Tab>Reports</Tab>
        <WinControls>
          <svg width="11" height="11" viewBox="0 0 11 11"><path d="M0 6h10" stroke="#111" /></svg>
          <svg width="11" height="11" viewBox="0 0 11 11"><rect x=".5" y=".5" width="9.500" height="9.500" fill="none" stroke="#111" /></svg>
          <svg width="11" height="11" viewBox="0 0 11 11"><path d="M.5.5l10 10M10.500.5l-10 10" stroke="#111" /></svg>
        </WinControls>
      </TitleBar>

      <Ribbon>
        <Group $w={351} $sep>
          <GroupBody $pl={5}>
            <LargeBtn $w={48} $sep><LargeIcon><Wizard /></LargeIcon><LargeText>Wizard</LargeText></LargeBtn>
            <LargeBtn $w={53}><LargeIcon><NewAsset /></LargeIcon><LargeText>New<br />asset<Caret /></LargeText></LargeBtn>
            <LargeBtn $w={52}><LargeIcon><ExportAgent /></LargeIcon><LargeText>Export<br />audit agent</LargeText></LargeBtn>
            <LargeBtn $w={56}><LargeIcon><ImportNodes /></LargeIcon><LargeText>Import<br />nodes</LargeText></LargeBtn>
            <ManageBtn><FolderCursor />Manage nodes<Caret $c="#7a6a3a" $ml={5} /></ManageBtn>
          </GroupBody>
          <GroupLabel $pl={7}>Manage your network</GroupLabel>
        </Group>
        <Group $w={225} $sep>
          <GroupBody>
            <LargeBtn $w={66}><LargeIcon><ScanBig /></LargeIcon></LargeBtn>
            <SmallCol $w={106} $fs={11.3}>
              <SmallBtn><ScanMy />Scan my PC only</SmallBtn>
              <SmallBtn><ScanMy dash />Scan selected</SmallBtn>
              <SmallBtn><ScanOther />Scan other PC</SmallBtn>
            </SmallCol>
            <LargeBtn $w={50}><LargeIcon><Schedule /></LargeIcon><LargeText>Schedule<br />scanning</LargeText></LargeBtn>
          </GroupBody>
          <GroupLabel $pl={4}>Scan network</GroupLabel>
        </Group>
        <Group $w={186}>
          <GroupBody>
            <LargeBtn $w={58}><LargeIcon><NetSummary /></LargeIcon><LargeText>Network<br />summary</LargeText></LargeBtn>
            <SmallCol $w={125}>
              <SmallBtn><Refresh />Update report now</SmallBtn>
              <SmallBtn><Bell />All network alerts</SmallBtn>
              <SmallBtn><Search />Search report</SmallBtn>
            </SmallCol>
          </GroupBody>
          <GroupLabel>Report</GroupLabel>
        </Group>
        <Group $grow $sep>
          <GroupBody $right>
            <LargeBtn $w={60}><LargeIcon><ExportNow /></LargeIcon><LargeText>Export<br />this now<Caret /></LargeText></LargeBtn>
            <LargeBtn $w={40}><LargeIcon><Printer /></LargeIcon><LargeText>Print<br /><Caret $ml={0} /></LargeText></LargeBtn>
            <LargeBtn $w={50}><LargeIcon><SettingsIco /></LargeIcon><LargeText>Settings</LargeText></LargeBtn>
          </GroupBody>
          <GroupLabel $pl={230}>Options</GroupLabel>
        </Group>
      </Ribbon>

      <Menu>
        <MenuItem><FolderBadge kind="plus" />Create group</MenuItem>
        <MenuItem><FolderBadge kind="minus" />Reset all groups</MenuItem>
        <MenuItem><Laptop badge="minus" />Delete selected asset</MenuItem>
        <MenuItem><Laptop badge="minus" />Clear network</MenuItem>
        <MenuSep />
        <MenuItem><Laptop badge="minus" />Remove nodes without data</MenuItem>
      </Menu>
      <Watermark>SOFTPEDIA</Watermark>

      <Body>
        <LeftCol>
          <YellowBar>Network structure</YellowBar>
          <NetworkBtn><TwoPCs />My network</NetworkBtn>
          <TreePanel>
            <TreeRow $ind={0}><Expander /><Dots $w={6} /><NetSum /><TreeLabel $ml={3}>Network summary (3)</TreeLabel></TreeRow>
            <TreeRow $ind={19}><Expander /><Dots $w={6} /><Folder /><TreeLabel $ml={4}>WORKGROUP (3)</TreeLabel></TreeRow>
            <TreeBranch />
            <TreeRow $ind={42}><Dots $w={11} /><Laptop /><TreeLabel $ml={4}>FX</TreeLabel></TreeRow>
            <TreeRow $ind={42}><Dots $w={11} /><Laptop badge="home" /><TreeLabel $ml={4} $sel>SOFTPEDIA-S93</TreeLabel></TreeRow>
            <TreeRow $ind={42}><Dots $w={11} /><Laptop /><TreeLabel $ml={4}>SOFTPEDIAPC</TreeLabel></TreeRow>
          </TreePanel>
        </LeftCol>

        <RightCol>
          <TodayBar>
            <TodayTag>TODAY</TodayTag>
            <SeeAll>...see all<Caret $c="#4d82c9" /></SeeAll>
          </TodayBar>
          <MainArea>
            <Report>
              <NodeCard>
                <NodeHead>
                  <NodeTitle>Computer name: WORKGROUP\SOFTPEDIA-S93</NodeTitle>
                  <NodeIp>IP: 127.0.0.1</NodeIp>
                </NodeHead>
                <NodeGrid>
                  {nodeInfo.map(r => (
                    <React.Fragment key={r[1]}>
                      <NodeItem><IconBox>{r[0]}</IconBox><span><b>{r[1]}</b>{r[2]}</span></NodeItem>
                      <NodeItem><IconBox>{r[3]}</IconBox><span><b>{r[4]}</b>{r[5]}</span></NodeItem>
                    </React.Fragment>
                  ))}
                </NodeGrid>
              </NodeCard>
              <Gap $h={21} />
              <Section $bg="#d88a32"><SectionIcon $b={6}>{I.drive}</SectionIcon>Custom data<Collapse /></Section>
              <DataRow $alt><DataLabel>Located</DataLabel><span>My network</span><Edit>edit</Edit></DataRow>
              <DataRow><DataLabel>Device</DataLabel><span>Desktop PC</span><Edit>edit</Edit></DataRow>
              <DataRow $alt><DataLabel>Cost</DataLabel><span>0 USD</span><Edit>edit</Edit></DataRow>
              <AddRow><AddBtn>{I.addData}Add custom data</AddBtn></AddRow>
              <Gap $h={10} />
              <Section $bg="#f2cbbb"><SectionIcon $b={4}>{I.warn}</SectionIcon>Alerts</Section>
              <Notice>- This asset doesn't have any active alerts, or they are disabled in Options -</Notice>
              <Section $bg="#a5c9e3"><SectionIcon $b={2}>{I.gear}</SectionIcon>Processor &amp; motherboard</Section>
              <DataRow $h={22}><DataLabel>Processor</DataLabel><span>Intel(R) Core(TM) i5-3550S CPU @ 3.00GHz (3001 MHz)</span></DataRow>
              <DataRow $alt $h={22}><DataLabel>Motherboard</DataLabel><span>0V8WGR (Dell Inc.)</span></DataRow>
              <Gap $h={20} />
              <Section $bg="#a5c9e3"><SectionIcon $b={19} $l={19}>{I.net}</SectionIcon></Section>
            </Report>
            <Scroll><ChevUp top={17} /><Thumb $h={159} /><ChevDown top={473} /></Scroll>
            <Side>
              <SideActive><IconBox>{I.idCard}</IconBox>Node summary</SideActive>
              <SideHead $mt={12}>Software</SideHead>
              {software.map(([t, ic]) => <SideItem key={t}><IconBox>{ic}</IconBox>{t}</SideItem>)}
              <SideHead $mt={12}>Hardware</SideHead>
              {hardware.map(([t, ic]) => <SideItem key={t}><IconBox>{ic}</IconBox>{t}</SideItem>)}
              <SideHead $mt={11}>Other data</SideHead>
            </Side>
            <Scroll $grow><ChevUp top={17} /><Thumb $h={335} /><ChevDown top={473} /></Scroll>
          </MainArea>
        </RightCol>
      </Body>

      <TabStrip><LogTab>{I.doc}Scan log</LogTab></TabStrip>
      <Status>
        15 days of free trial left. You can inventory the maximum of 25 nodes. 3 nodes already managed
        <StatusLink>Buy license now</StatusLink>
        <StatusLink>Request trial extension</StatusLink>
        <NavBox>{I.arrowL}Navigation<Caret $ml={4} />{I.arrowR}</NavBox>
        <Grip width="11" height="11" viewBox="0 0 11 11"><path d="M8 2h2v2H8zM4 6h2v2H4zM8 6h2v2H8zM1 9h2v2H1zM5 9h2v2H5zM8 9h2v2H8z" fill="#9aaabc" /></Grip>
      </Status>
    </Window>
  );
}
